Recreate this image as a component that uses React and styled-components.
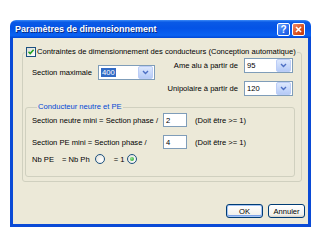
import React from "react";
import styled, { createGlobalStyle } from "styled-components";

const Global = createGlobalStyle`
  html, body {
    margin: 0;
    padding: 0;
    background: #fff;
  }
  body {
    font-family: "Liberation Sans", Arial, sans-serif;
    font-size: 7.6px;
    color: #000;
  }
`;

const Page = styled.div`
  width: 320px;
  height: 250px;
  padding: 20px 0 0 10px;
  box-sizing: border-box;
`;

const Window = styled.div`
  width: 301px;
  height: 207px;
  display: flex;
  flex-direction: column;
`;

const TitleBar = styled.div`
  height: 18px;
  flex: none;
  border-radius: 6px 6px 0 0;
  background: linear-gradient(
    to bottom,
    #3d8cf7 0%,
    #0a5ae6 12%,
    #0453e6 45%,
    #0a62f2 85%,
    #0047d6 100%
  );
  display: flex;
  align-items: center;
  padding: 0 6px 0 5px;
`;

const Title = styled.span`
  flex: 1;
  color: #fff;
  font-weight: bold;
  font-size: 9px;
  text-shadow: 1px 1px 0 #0a2a80;
`;

const CaptionButton = styled.div`
  width: 13px;
  height: 13px;
  margin-left: 2px;
  box-sizing: border-box;
  border: 1px solid #fff;
  border-radius: 2px;
  background: ${(p) =>
    p.$close
      ? "linear-gradient(135deg, #f08a6a, #d8501e 60%, #c23a10)"
      : "linear-gradient(135deg, #6fa4ff, #2a6ef0 60%, #1a56d8)"};
  display: flex;
  align-items: center;
  justify-content: center;
  color: #fff;
  font-weight: bold;
  font-size: 10px;
`;

const Frame = styled.div`
  flex: 1;
  display: flex;
  flex-direction: column;
  background: #ece9d8;
  border: 3px solid #0a4ad6;
  border-top: none;
  padding-top: 8px;
`;

const Group = styled.fieldset`
  margin: 0;
  padding: 0;
  min-inline-size: 0;
  border: 1px solid #d0d0bf;
  border-radius: 3px;
`;

const OuterGroup = styled(Group)`
  margin: 0 6px 0 9px;
  padding-bottom: 4px;
`;

const InnerGroup = styled(Group)`
  margin: 5px 6px 0 2px;
  padding: 0 0 10px 6px;
`;

const Legend = styled.legend`
  padding: 0 1px;
  line-height: 12px;
  display: flex;
  align-items: center;
  gap: ${(p) => (p.$blue ? 0 : 1)}px;
  margin-left: ${(p) => p.$indent}px;
  color: ${(p) => (p.$blue ? "#0046d5" : "#000")};
`;

const Check = styled.span`
  width: 10px;
  height: 10px;
  box-sizing: border-box;
  border: 1px solid #1c5180;
  background: linear-gradient(135deg, #dcdcd7, #fff);
  display: flex;
  align-items: center;
  justify-content: center;
`;

const TopRow = styled.div`
  display: flex;
  justify-content: space-between;
  padding: 0 8px 0 9px;
`;

const LeftField = styled.div`
  display: flex;
  align-items: center;
  margin-top: 7px;
  align-self: flex-start;
`;

const FieldLabel = styled.span`
  white-space: nowrap;
  width: ${(p) => (p.$w ? p.$w + "px" : "auto")};
`;

const RightGrid = styled.div`
  display: grid;
  grid-template-columns: auto 49px;
  align-items: center;
  column-gap: 6px;
  row-gap: 8px;
  justify-items: end;
`;

const Combo = styled.div`
  width: ${(p) => p.$w}px;
  height: 15px;
  box-sizing: border-box;
  border: 1px solid #7f9db9;
  background: #fff;
  display: flex;
  align-items: center;
  padding: 1px;
`;

const ComboText = styled.span`
  flex: 1;
  padding-left: 1px;
`;

const Highlight = styled.span`
  background: #316ac5;
  color: #fff;
  padding: 0 1px;
`;

const DropButton = styled.span`
  width: 13px;
  height: 11px;
  border: 1px solid #bccdf7;
  border-radius: 2px;
  background: linear-gradient(to bottom, #dde8fd, #b6cbf7);
  display: flex;
  align-items: center;
  justify-content: center;
`;

const Rows = styled.div`
  display: flex;
  flex-direction: column;
`;

const Row = styled.div`
  display: flex;
  align-items: center;
  height: 14px;
  margin-top: ${(p) => p.$top}px;
`;

const TextBox = styled.span`
  width: 24px;
  height: 14px;
  box-sizing: border-box;
  border: 1px solid #7f9db9;
  background: #fff;
  padding-left: 2px;
  display: flex;
  align-items: center;
  margin-right: 8px;
`;

const Radio = styled.span`
  width: 10px;
  height: 10px;
  box-sizing: border-box;
  border: 1px solid #1c5180;
  border-radius: 50%;
  background: radial-gradient(circle at 65% 65%, #fff, #dcdcd5);
  display: flex;
  align-items: center;
  justify-content: center;
  margin: 0 ${(p) => p.$mr}px 0 ${(p) => p.$ml}px;
  &::after {
    content: "";
    display: ${(p) => (p.$on ? "block" : "none")};
    width: 4px;
    height: 4px;
    border-radius: 50%;
    background: radial-gradient(circle at 35% 35%, #8fe08f, #21a121);
  }
`;

const Buttons = styled.div`
  margin-top: auto;
  margin-bottom: 6px;
  display: flex;
  justify-content: flex-end;
  gap: 5px;
  padding-right: 3px;
`;

const Button = styled.button`
  width: 37px;
  height: 14px;
  padding: 0;
  font-family: inherit;
  font-size: 7.6px;
  color: #000;
  border: 1px solid #003c74;
  border-radius: 3px;
  background: linear-gradient(to bottom, #fff, #f2f1ec 80%, #d6d0c5);
  box-shadow: ${(p) =>
    p.$default ? "inset 0 0 0 1px #a4c3f3, inset 0 -1px 0 1px #7ba2e7" : "none"};
`;

function ComboField({ width, value, selected }) {
  return (
    <Combo $w={width}>
      <ComboText>{selected ? <Highlight>{value}</Highlight> : value}</ComboText>
      <DropButton>
        <svg width="7" height="5" viewBox="0 0 7 5">
          <path d="M1 1 L3.5 3.5 L6 1" fill="none" stroke="#4d6fc4" strokeWidth="1.4" />
        </svg>
      </DropButton>
    </Combo>
  );
}

export default function App() {
  return (
    <>
      <Global />
      <Page>
        <Window>
          <TitleBar>
            <Title>Paramètres de dimensionnement</Title>
            <CaptionButton>?</CaptionButton>
            <CaptionButton $close>
              <svg width="7" height="7" viewBox="0 0 7 7">
                <path d="M1 1 L6 6 M6 1 L1 6" stroke="#fff" strokeWidth="1.6" />
              </svg>
            </CaptionButton>
          </TitleBar>
          <Frame>
            <OuterGroup>
              <Legend $indent={2}>
                <Check>
                  <svg width="8" height="8" viewBox="0 0 8 8">
                    <path d="M1.5 3.8 L3.2 5.6 L6.6 1.8" fill="none" stroke="#21a121" strokeWidth="1.5" />
                  </svg>
                </Check>
                Contraintes de dimensionnement des conducteurs (Conception automatique)
              </Legend>
              <TopRow>
                <LeftField>
                  <FieldLabel $w={66}>Section maximale</FieldLabel>
                  <ComboField width={57} value="400" selected />
                </LeftField>
                <RightGrid>
                  <FieldLabel>Ame alu à partir de</FieldLabel>
                  <ComboField width={49} value="95" />
                  <FieldLabel>Unipolaire à partir de</FieldLabel>
                  <ComboField width={49} value="120" />
                </RightGrid>
              </TopRow>
              <InnerGroup>
                <Legend $indent={5} $blue>
                  Conducteur neutre et PE
                </Legend>
                <Rows>
                  <Row $top={0}>
                    <FieldLabel $w={131}>Section neutre mini = Section phase /</FieldLabel>
                    <TextBox>2</TextBox>
                    <span>(Doit être &gt;= 1)</span>
                  </Row>
                  <Row $top={8}>
                    <FieldLabel $w={131}>Section PE mini = Section phase /</FieldLabel>
                    <TextBox>4</TextBox>
                    <span>(Doit être &gt;= 1)</span>
                  </Row>
                  <Row $top={3}>
                    <FieldLabel $w={30}>Nb PE</FieldLabel>
                    <span>= Nb Ph</span>
                    <Radio $ml={5} $mr={9} />
                    <span>= 1</span>
                    <Radio $ml={3} $mr={0} $on />
                  </Row>
                </Rows>
              </InnerGroup>
            </OuterGroup>
            <Buttons>
              <Button $default>OK</Button>
              <Button>Annuler</Button>
            </Buttons>
          </Frame>
        </Window>
      </Page>
    </>
  );
}
